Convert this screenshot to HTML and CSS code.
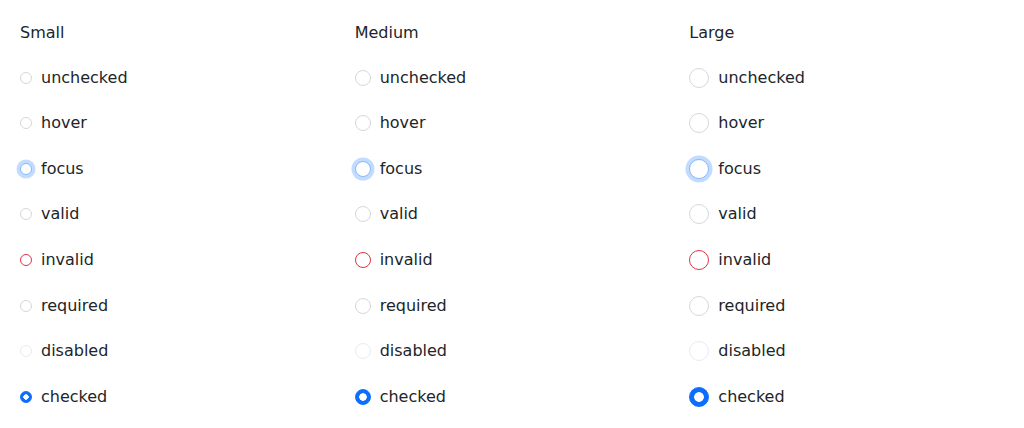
FILE: index.html
```html
<!DOCTYPE html>
<html lang="en">
<head>
<meta charset="utf-8">
<title>Radio states</title>
<link rel="stylesheet" href="styles.css">
</head>
<body>
<div class="grid">
  <div class="col sm">
    <div class="heading">Small</div>
    <label class="row"><span class="radio"></span>unchecked</label>
    <label class="row"><span class="radio"></span>hover</label>
    <label class="row"><span class="radio focus"></span>focus</label>
    <label class="row"><span class="radio"></span>valid</label>
    <label class="row"><span class="radio invalid"></span>invalid</label>
    <label class="row"><span class="radio"></span>required</label>
    <label class="row"><span class="radio disabled"></span>disabled</label>
    <label class="row"><span class="radio checked"></span>checked</label>
  </div>
  <div class="col md">
    <div class="heading">Medium</div>
    <label class="row"><span class="radio"></span>unchecked</label>
    <label class="row"><span class="radio"></span>hover</label>
    <label class="row"><span class="radio focus"></span>focus</label>
    <label class="row"><span class="radio"></span>valid</label>
    <label class="row"><span class="radio invalid"></span>invalid</label>
    <label class="row"><span class="radio"></span>required</label>
    <label class="row"><span class="radio disabled"></span>disabled</label>
    <label class="row"><span class="radio checked"></span>checked</label>
  </div>
  <div class="col lg">
    <div class="heading">Large</div>
    <label class="row"><span class="radio"></span>unchecked</label>
    <label class="row"><span class="radio"></span>hover</label>
    <label class="row"><span class="radio focus"></span>focus</label>
    <label class="row"><span class="radio"></span>valid</label>
    <label class="row"><span class="radio invalid"></span>invalid</label>
    <label class="row"><span class="radio"></span>required</label>
    <label class="row"><span class="radio disabled"></span>disabled</label>
    <label class="row"><span class="radio checked"></span>checked</label>
  </div>
</div>
</body>
</html>
```

FILE: styles.css
```css
* { box-sizing: border-box; }
html, body { margin: 0; background: #fff; }
body {
  font-family: "DejaVu Sans", sans-serif;
  font-size: 16px;
  color: #212529;
}
.grid {
  display: grid;
  grid-template-columns: repeat(3, 1fr);
  column-gap: 20px;
  padding: 21px 20px 20px;
}
.col {
  display: flex;
  flex-direction: column;
  gap: 21.6px;
}
.heading, .row {
  line-height: 24px;
  height: 24px;
}
.heading { height: 23px; }
.row {
  display: flex;
  align-items: center;
  gap: 9px;
}
.radio {
  flex: none;
  border-radius: 50%;
  border: 1px solid #d4d7dc;
  background: #fff;
  width: 16px;
  height: 16px;
}
.sm .radio { width: 12px; height: 12px; }
.md .radio { width: 16px; height: 16px; }
.lg .radio { width: 20px; height: 20px; }
.radio.focus {
  border-color: #86b7fe;
  box-shadow: 0 0 0 3.5px rgba(13, 110, 253, 0.25);
}
.radio.invalid { border-color: #dc3545; }
.radio.disabled { border-color: #e9ebee; }
.radio.checked {
  border-color: #0d6efd;
  background: radial-gradient(circle, #fff 0 35%, #0d6efd 41%);
}
```
